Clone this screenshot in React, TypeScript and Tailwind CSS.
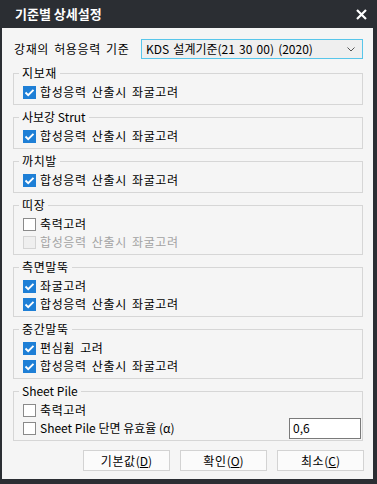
import React from 'react';

type CheckState = 'on' | 'off' | 'disabled';

const Box = ({ state }: { state: CheckState }) => {
  if (state === 'on') {
    return (
      <svg width="13" height="13" viewBox="0 0 13 13" className="shrink-0">
        <rect x="0" y="0" width="13" height="13" fill="#1e7fd6" />
        <polyline points="2.5,6.5 5.2,9.2 10.5,3.8" fill="none" stroke="#ffffff" strokeWidth="1.9" />
      </svg>
    );
  }
  if (state === 'disabled') {
    return <div className="w-[13px] h-[13px] shrink-0 border border-[#d4d4d4] bg-[#efefef]" />;
  }
  return <div className="w-[13px] h-[13px] shrink-0 border border-[#8a8a8a] bg-white" />;
};

// 한글 라벨은 자간을 조금 벌려야 원본 폭과 맞음
const ko = 'tracking-[0.6px] [word-spacing:2px]';

const Row = ({
  label,
  state,
  latin,
  children,
}: {
  label: string;
  state: CheckState;
  latin?: boolean;
  children?: React.ReactNode;
}) => (
  <div className="h-[18px] flex items-center pl-[9px]">
    <Box state={state} />
    <span
      className={`ml-[4px] ${latin ? '' : ko} ${state === 'disabled' ? 'text-[#a3a3a3]' : 'text-black'}`}
    >
      {label}
    </span>
    {children}
  </div>
);

const Group = ({
  title,
  latin,
  className,
  children,
}: {
  title: string;
  latin?: boolean;
  className?: string;
  children: React.ReactNode;
}) => (
  <fieldset className={`border border-[#d6d6d6] pt-[3px] pb-[3px] ${className ?? ''}`}>
    <legend className={`ml-[5px] px-[3px] leading-[14px] text-black ${latin ? '' : ko}`}>{title}</legend>
    {children}
  </fieldset>
);

const Btn = ({ text, key1 }: { text: string; key1: string }) => (
  <button className="w-[87px] h-[21px] border border-[#d3d3d3] bg-[#fbfbfb] text-black text-[12px] leading-[14px] flex items-center justify-center">
    <span className={ko}>{text}</span>(<span className="underline">{key1}</span>)
  </button>
);

export default function App() {
  return (
    <div className="w-[377px] h-[484px] bg-[#2b2e33] flex flex-col font-['Noto_Sans_CJK_KR','Noto_Sans',sans-serif] text-[12px] leading-[14px]">
      <div className="h-[28px] shrink-0 flex items-center justify-between pl-[15px] pr-[10px]">
        <span className="text-white text-[13px] font-bold">기준별 상세설정</span>
        <svg width="11" height="11" viewBox="0 0 11 11">
          <path d="M1 1 L10 10 M10 1 L1 10" stroke="#ffffff" strokeWidth="2.2" />
        </svg>
      </div>
      <div className="flex-1 ml-[2px] mr-[4px] mb-[5px] bg-[#f5f5f5] pl-[11px] pr-[10px] pt-[11px] flex flex-col">
        <div className="h-[20px] flex items-center w-[350px]">
          <span className={`w-[128px] pl-[1px] text-black ${ko}`}>강재의 허용응력 기준</span>
          <div className="w-[222px] h-[20px] border border-[#58c6ea] bg-[#efefef] flex items-center justify-between pl-[4px] pr-[7px]">
            <span className="text-black [word-spacing:1.5px]">KDS 설계기준(21 30 00) (2020)</span>
            <svg width="8" height="5" viewBox="0 0 8 5">
              <path d="M0.5 0.5 L4 4 L7.5 0.5" fill="none" stroke="#555" strokeWidth="1" />
            </svg>
          </div>
        </div>

        <div className="w-[350px] flex flex-col">
          <Group title="지보재" className="mt-[7px]">
            <Row label="합성응력 산출시 좌굴고려" state="on" />
          </Group>
          <Group title="사보강 Strut" latin className="mt-[5px]">
            <Row label="합성응력 산출시 좌굴고려" state="on" />
          </Group>
          <Group title="까치발" className="mt-[5px]">
            <Row label="합성응력 산출시 좌굴고려" state="on" />
          </Group>
          <Group title="띠장" className="mt-[5px]">
            <Row label="축력고려" state="off" />
            <Row label="합성응력 산출시 좌굴고려" state="disabled" />
          </Group>
          <Group title="측면말뚝" className="mt-[5px]">
            <Row label="좌굴고려" state="on" />
            <Row label="합성응력 산출시 좌굴고려" state="on" />
          </Group>
          <Group title="중간말뚝" className="mt-[5px]">
            <Row label="편심휨 고려" state="on" />
            <Row label="합성응력 산출시 좌굴고려" state="on" />
          </Group>
          <Group title="Sheet Pile" latin className="mt-[5px]">
            <Row label="축력고려" state="off" />
            <Row label="Sheet Pile 단면 유효율 (α)" state="off" latin>
              <div className="ml-auto mr-[1px] w-[72px] h-[21px] shrink-0 border border-[#7a7a7a] bg-white flex items-center pl-[3px] text-black">
                0,6
              </div>
            </Row>
          </Group>
        </div>

        <div className="mt-[9px] w-[351px] flex justify-end gap-[10px]">
          <Btn text="기본값" key1="D" />
          <Btn text="확인" key1="O" />
          <Btn text="최소" key1="C" />
        </div>
      </div>
    </div>
  );
}
